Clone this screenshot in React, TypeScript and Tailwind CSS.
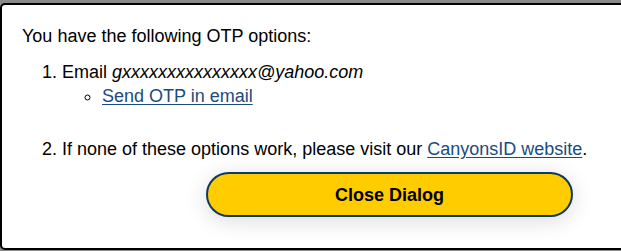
import React from 'react';

const App: React.FC = () => {
  return (
    <div className="h-[251px] w-[621px] overflow-hidden bg-[#8a8a8a] pt-[3px] font-['Liberation_Sans',Arial,sans-serif] text-[18px] leading-6 text-black">
      {/* Dialog */}
      <div className="h-[247px] w-[800px] rounded-[5px] border-2 border-black bg-white pl-5 pt-[19px]">
        <p>You have the following OTP options:</p>

        <ol className="mt-3 list-decimal pl-10">
          <li>
            Email <em>gxxxxxxxxxxxxxxx@yahoo.com</em>
            <ul className="list-[circle] pl-10">
              <li>
                <a href="#" className="text-[#1b4b80] underline underline-offset-2">
                  Send OTP in email
                </a>
              </li>
            </ul>
          </li>
          <li className="mt-[29px]">
            If none of these options work, please visit our{' '}
            <a href="#" className="text-[#1b4b80] underline underline-offset-2">
              CanyonsID website
            </a>
            .
          </li>
        </ol>

        <button
          type="button"
          className="ml-[184px] mt-[11px] h-[45px] w-[367px] rounded-full border-2 border-[#0d3a63] bg-[#ffcc00] font-bold text-black shadow-[0_4px_22px_rgba(0,0,0,0.14)]"
        >
          Close Dialog
        </button>
      </div>
    </div>
  );
};

export default App;
